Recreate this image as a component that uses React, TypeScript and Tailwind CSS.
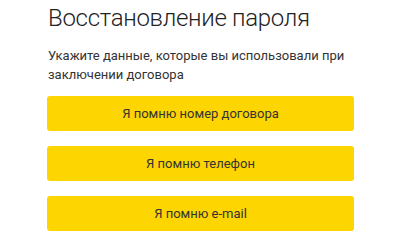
export default function App() {
  const options = ["Я помню номер договора", "Я помню телефон", "Я помню e-mail"]

  return (
    <div className="min-h-screen w-[400px] bg-white font-['Roboto',sans-serif]">
      <div className="px-[48px] pt-[3px]">
        <h1 className="text-[24px] leading-[31px] font-light tracking-[-0.3px] text-[#222]">
          Восстановление пароля
        </h1>
        <p className="mt-[12px] text-[13px] leading-[19px] text-[#333]">
          Укажите данные, которые вы использовали при заключении договора
        </p>
        <div className="-ml-px mt-[12px] flex w-[307px] flex-col gap-[15px]">
          {options.map((label) => (
            <button
              key={label}
              className="h-[35px] w-full rounded-[3px] bg-[#fdd500] text-[13px] text-[#333]"
            >
              {label}
            </button>
          ))}
        </div>
      </div>
    </div>
  )
}
